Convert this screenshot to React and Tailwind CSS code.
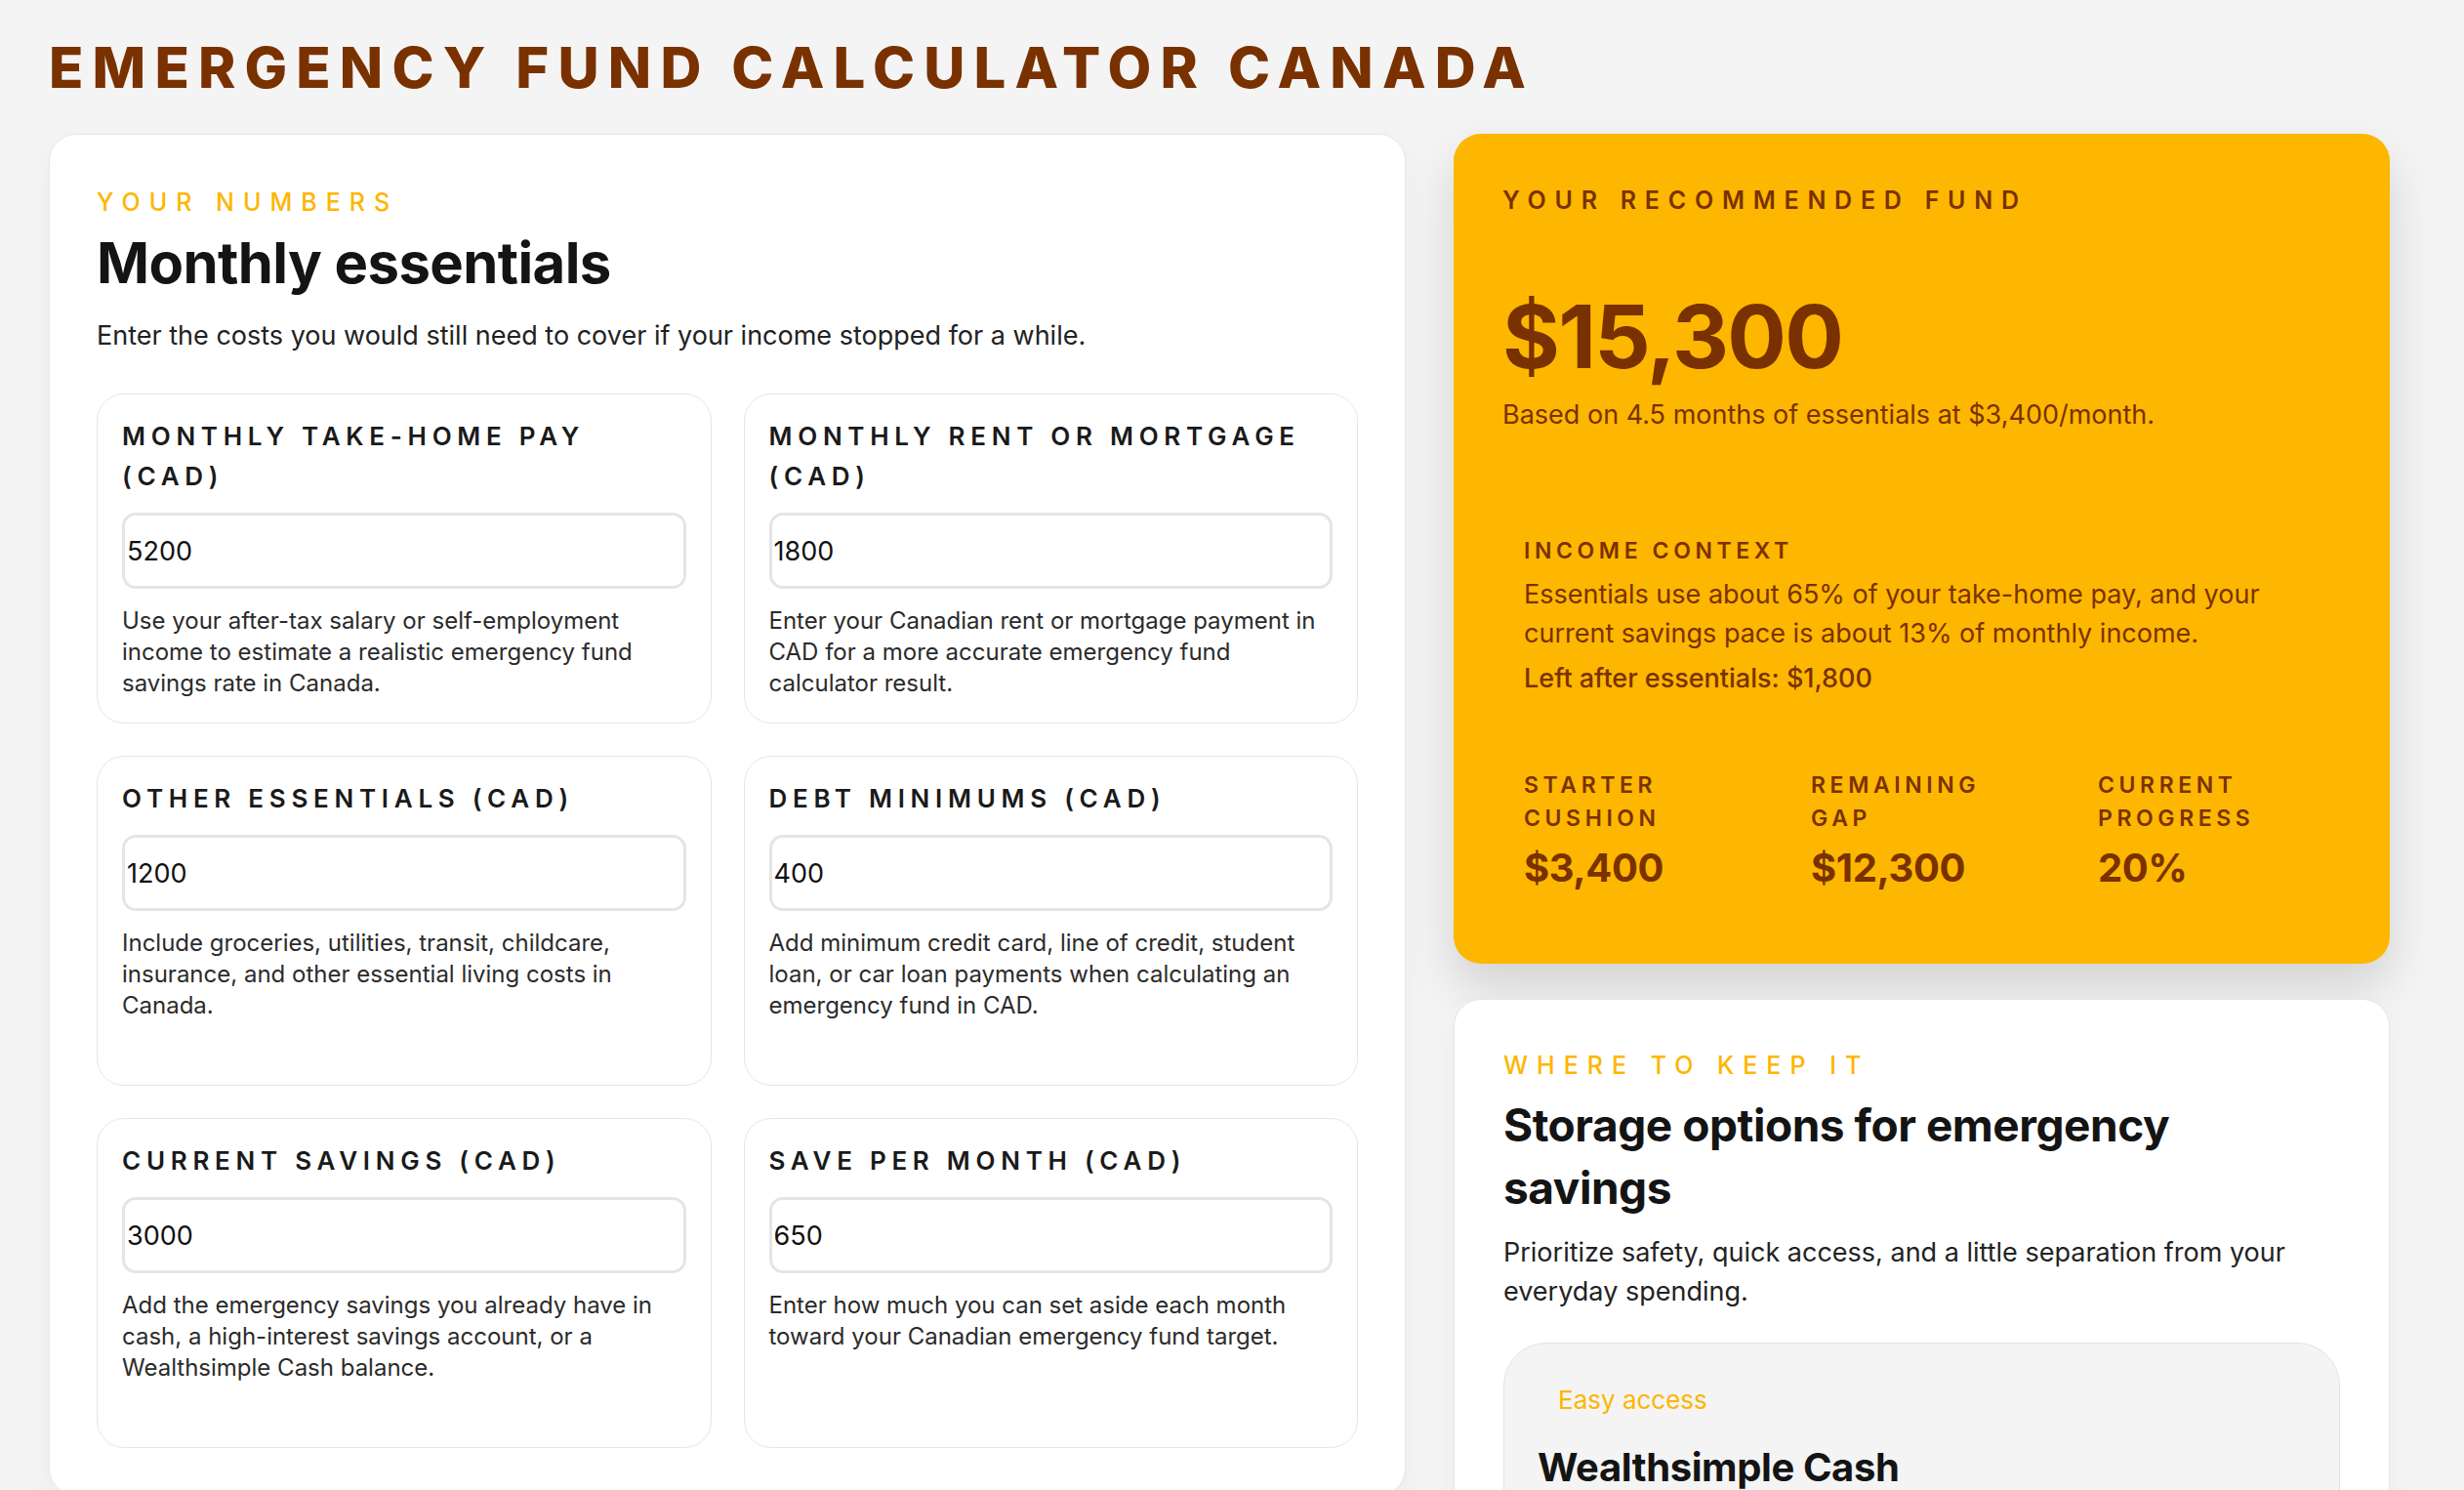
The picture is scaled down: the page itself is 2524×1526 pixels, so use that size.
import { useState } from 'react'

const FIELDS = [
  {
    key: 'pay',
    label: 'Monthly take-home pay (CAD)',
    help: 'Use your after-tax salary or self-employment income to estimate a realistic emergency fund savings rate in Canada.',
  },
  {
    key: 'rent',
    label: 'Monthly rent or mortgage (CAD)',
    help: 'Enter your Canadian rent or mortgage payment in CAD for a more accurate emergency fund calculator result.',
  },
  {
    key: 'other',
    label: 'Other essentials (CAD)',
    help: 'Include groceries, utilities, transit, childcare, insurance, and other essential living costs in Canada.',
  },
  {
    key: 'debt',
    label: 'Debt minimums (CAD)',
    help: 'Add minimum credit card, line of credit, student loan, or car loan payments when calculating an emergency fund in CAD.',
  },
  {
    key: 'savings',
    label: 'Current savings (CAD)',
    help: 'Add the emergency savings you already have in cash, a high-interest savings account, or a Wealthsimple Cash balance.',
  },
  {
    key: 'monthly',
    label: 'Save per month (CAD)',
    help: 'Enter how much you can set aside each month toward your Canadian emergency fund target.',
  },
]

const MONTHS = 4.5

const money = (n) => '$' + Math.round(n).toLocaleString('en-US')
const pct = (n) => Math.round(n) + '%'

const FieldCard = ({ label, help, value, onChange }) => (
  <div className="flex flex-col gap-[17px] rounded-[28px] border border-[#e6e6e6] bg-white px-[25px] pt-[22px] pb-[24px]">
    <label className="max-w-[560px] text-[26px] leading-[41px] font-semibold uppercase tracking-[0.22em] text-[#1a1a1a]">
      {label}
    </label>
    <input
      type="text"
      value={value}
      onChange={(e) => onChange(e.target.value)}
      className="h-[78px] w-full rounded-[14px] border-[3.5px] border-[#e5e5e5] bg-white pl-[2px] text-[27px] text-[#111] outline-none"
    />
    <p className="text-[24px] leading-[32px] text-[#2b2b2b]">{help}</p>
  </div>
)

const Stat = ({ label, value }) => (
  <div>
    <div className="text-[23px] leading-[34px] font-semibold uppercase tracking-[0.2em]">{label}</div>
    <div className="mt-[10px] text-[40px] leading-[48px] font-bold tracking-[-0.01em]">{value}</div>
  </div>
)

export default function App() {
  const [vals, setVals] = useState({
    pay: '5200',
    rent: '1800',
    other: '1200',
    debt: '400',
    savings: '3000',
    monthly: '650',
  })

  const num = (k) => parseFloat(vals[k]) || 0
  const essentials = num('rent') + num('other') + num('debt')
  const target = essentials * MONTHS
  const gap = Math.max(target - num('savings'), 0)
  const progress = target > 0 ? (num('savings') / target) * 100 : 0
  const essentialShare = num('pay') > 0 ? (essentials / num('pay')) * 100 : 0
  const savingsPace = num('pay') > 0 ? (num('monthly') / num('pay')) * 100 : 0
  const leftOver = num('pay') - essentials

  return (
    <div className="min-h-screen bg-[#f4f4f4] pl-[50px] pt-[34px] font-['Inter',sans-serif] text-[#1a1a1a]">
      <h1 className="mb-[33px] text-[58px] leading-[70px] font-extrabold uppercase tracking-[0.158em] text-[#7a3100]">
        Emergency Fund Calculator Canada
      </h1>

      <div className="flex items-start gap-[49px]">
        {/* Inputs */}
        <section className="w-[1390px] rounded-[28px] border border-[#e6e6e6] bg-white px-[48px] pt-[51px] pb-[48px] shadow-[0_10px_30px_rgba(0,0,0,0.04)]">
          <div className="text-[25px] leading-[37px] font-medium uppercase tracking-[0.36em] text-[#fdb600]">Your numbers</div>
          <h2 className="mt-[8px] text-[58px] leading-[70px] font-bold tracking-[-0.01em] text-[#141414]">Monthly essentials</h2>
          <p className="mt-[20px] text-[27px] leading-[40px] text-[#222]">
            Enter the costs you would still need to cover if your income stopped for a while.
          </p>

          <div className="mt-[39px] grid grid-cols-2 auto-rows-fr gap-[33px]">
            {FIELDS.map((f) => (
              <FieldCard
                key={f.key}
                label={f.label}
                help={f.help}
                value={vals[f.key]}
                onChange={(v) => setVals({ ...vals, [f.key]: v })}
              />
            ))}
          </div>
        </section>

        {/* Results */}
        <div className="flex w-[959px] flex-col gap-[36px]">
          <section className="rounded-[28px] bg-[#fdb700] px-[50px] pt-[50px] pb-[74px] text-[#7a3100] shadow-[0_24px_50px_rgba(0,0,0,0.14)]">
            <div className="text-[25px] leading-[37px] font-semibold uppercase tracking-[0.35em]">Your recommended fund</div>
            <div className="mt-[72px] text-[90px] leading-[97px] font-bold tracking-[-0.02em]">{money(target)}</div>
            <p className="mt-[12px] text-[27px] leading-[39px]">
              Based on {MONTHS} months of essentials at {money(essentials)}/month.
            </p>

            <div className="mt-[104px] px-[22px]">
              <div className="text-[23px] leading-[32px] font-semibold uppercase tracking-[0.2em]">Income context</div>
              <p className="mt-[9px] text-[27px] leading-[40px]">
                Essentials use about {pct(essentialShare)} of your take-home pay, and your current savings pace is about{' '}
                {pct(savingsPace)} of monthly income.
              </p>
              <p className="mt-[6px] text-[27px] leading-[40px] font-medium">Left after essentials: {money(leftOver)}</p>

              <div className="mt-[72px] grid grid-cols-[230px_230px_230px] gap-x-[64px]">
                <Stat label="Starter cushion" value={money(essentials)} />
                <Stat label="Remaining gap" value={money(gap)} />
                <Stat label="Current progress" value={pct(progress)} />
              </div>
            </div>
          </section>

          <section className="rounded-[28px] border border-[#e6e6e6] bg-white px-[50px] pt-[49px] pb-[48px] shadow-[0_10px_30px_rgba(0,0,0,0.04)]">
            <div className="text-[25px] leading-[37px] font-medium uppercase tracking-[0.36em] text-[#fdb600]">Where to keep it</div>
            <h2 className="mt-[10px] max-w-[780px] text-[46px] leading-[64px] font-bold tracking-[-0.01em] text-[#141414]">
              Storage options for emergency savings
            </h2>
            <p className="mt-[15px] text-[27px] leading-[40px] text-[#222]">
              Prioritize safety, quick access, and a little separation from your everyday spending.
            </p>

            <div className="mt-[32px] rounded-[44px] border border-[#e3e3e3] bg-[#f4f4f4] px-[34px] pt-[38px] pb-[60px]">
              <span className="inline-block px-[21px] text-[26px] leading-[39px] text-[#fdb600]">Easy access</span>
              <h3 className="mt-[24px] text-[40px] leading-[52px] font-bold tracking-[-0.01em] text-[#141414]">Wealthsimple Cash</h3>
              <p className="mt-[12px] text-[24px] leading-[34px] text-[#333]">
                A high-interest cash account you can move money out of quickly when something comes up.
              </p>
            </div>
          </section>
        </div>
      </div>
    </div>
  )
}
